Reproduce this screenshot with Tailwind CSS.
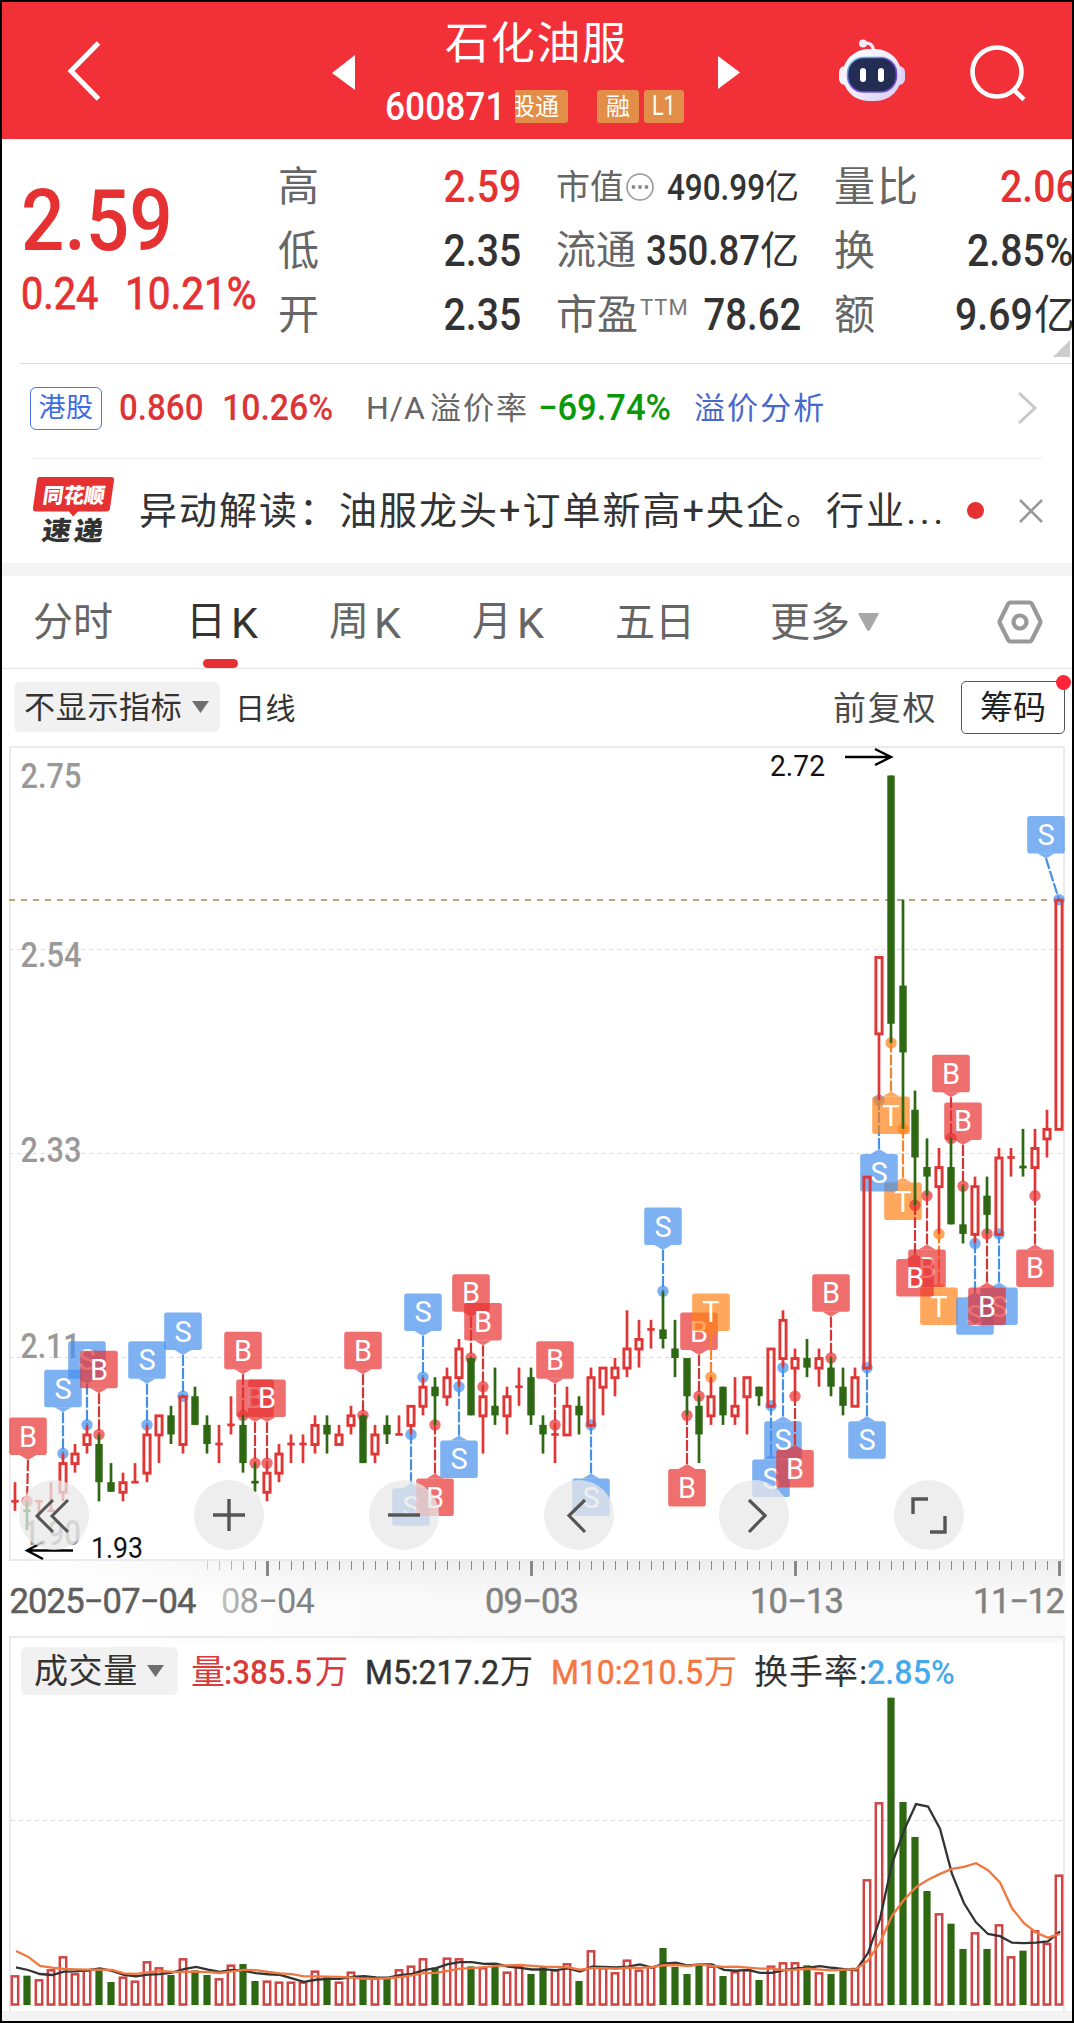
<!DOCTYPE html>
<html lang="zh-CN">
<head>
    <meta charset="UTF-8">
    <meta name="viewport" content="width=device-width, initial-scale=1.0">
    <title>石化油服 600871</title>
    <script src="https://cdn.jsdelivr.net/npm/@tailwindcss/browser@4"></script>
</head>
<body class="bg-black [font-family:Roboto,'Noto_Sans_CJK_SC',sans-serif] leading-none text-[#333]">

    <div class="w-[1074px] h-[2023px] border-2 border-black bg-white overflow-hidden flex flex-col whitespace-nowrap">

        <!-- Header -->
        <header class="h-[137px] shrink-0 bg-[#f23038] text-white flex">
            <div class="w-[326px] pl-[65px] pt-[38px]">
                <svg class="w-[36px] h-[62px]" viewBox="0 0 36 62" fill="none" stroke="#fff" stroke-width="5">
                    <path d="M31.500 3L4 31l27.500 28"/>
                </svg>
            </div>
            <div class="w-[30px] pt-[53px]">
                <svg class="w-[28px] h-[36px]" viewBox="0 0 28 36" fill="#fff"><path d="M4 18L27 0v35z"/></svg>
            </div>
            <div class="w-[358px] flex flex-col pt-[19px]">
                <h1 class="pl-[87px] text-[44px] tracking-[1.700px] leading-[46px]">石化油服</h1>
                <div class="flex items-center pl-[27px] mt-[23px] h-[33px]">
                    <span class="w-[130px] shrink-0 text-[38px] font-medium"><span class="inline-block origin-left scale-x-[.93]">600871</span></span>
                    <span class="w-[53px] shrink-0 h-[33px] rounded-r-[3px] bg-[#e28d48] text-[24px] flex items-center justify-end pr-[9px] overflow-hidden">股通</span>
                    <span class="ml-[29px] shrink-0 w-[42px] h-[33px] rounded-[3px] bg-[#e28d48] text-[24px] flex items-center justify-center">融</span>
                    <span class="ml-[5px] shrink-0 w-[40px] h-[33px] rounded-[3px] bg-[#e28d48] text-[27px] flex items-center justify-center"><span class="inline-block scale-x-[.8]">L1</span></span>
                </div>
            </div>
            <div class="w-[121px] pt-[54px]">
                <svg class="w-[28px] h-[36px]" viewBox="0 0 28 36" fill="#fff"><path d="M2 0v33L24 16.500z"/></svg>
            </div>
            <div class="w-[130px] pt-[34px]">
                <!-- assistant robot -->
                <svg class="w-[70px] h-[68px]" viewBox="837 36 70 68">
                    <defs>
                        <linearGradient id="shell" x1="0" y1="0" x2="1" y2="1">
                            <stop offset="0" stop-color="#fff"/><stop offset=".5" stop-color="#f1edfb"/><stop offset="1" stop-color="#d3caf3"/>
                        </linearGradient>
                        <linearGradient id="rim" x1="0" y1="0" x2="1" y2="1">
                            <stop offset="0" stop-color="#64d3e8"/><stop offset=".5" stop-color="#7a53dc"/><stop offset="1" stop-color="#6d49d5"/>
                        </linearGradient>
                    </defs>
                    <path d="M863 43.500c6-1.500 10 1 10.500 7" fill="none" stroke="#f1e6f5" stroke-width="3.200"/>
                    <circle cx="863" cy="43.500" r="4" fill="#f3ebfa"/>
                    <rect x="839" y="66" width="12" height="19" rx="6" fill="#f4f1fd"/>
                    <rect x="893" y="66" width="12" height="19" rx="6" fill="#d9d0f6"/>
                    <rect x="842.500" y="49" width="59" height="52" rx="26" fill="url(#shell)"/>
                    <rect x="847.500" y="57.500" width="49" height="34.500" rx="16" fill="#232c52" stroke="url(#rim)" stroke-width="1.600"/>
                    <rect x="860" y="68" width="6" height="14" rx="3" fill="#fff"/>
                    <rect x="878" y="68" width="6" height="14" rx="3" fill="#fff"/>
                </svg>
            </div>
            <div class="pt-[40px]">
                <svg class="w-[60px] h-[62px]" viewBox="967 42 60 62" fill="none" stroke="#fff" stroke-width="4.600">
                    <circle cx="997" cy="72" r="24.500"/><path d="M1013.500 89.500l10.500 10"/>
                </svg>
            </div>
        </header>

        <!-- Quote -->
        <section class="h-[224px] shrink-0 flex relative">
            <div class="w-[276px] shrink-0 pl-[19px] pt-[36px] text-[#e63132] font-medium">
                <div class="text-[86px] h-[92px] flex items-center"><span class="inline-block origin-left scale-x-[.89]">2.59</span></div>
                <div class="flex text-[44px] font-normal [-webkit-text-stroke:0.800px_#e63132] mt-[5px]">
                    <span class="w-[104px]"><span class="inline-block origin-left scale-x-[.9]">0.24</span></span>
                    <span class="inline-block origin-left scale-x-[.92]">10.21%</span>
                </div>
            </div>
            <div class="w-[243px] shrink-0 pt-[16px] text-[41px] flex flex-col [&>div]:h-[64px] [&>div]:flex [&>div]:items-center [&>div]:justify-between">
                <div><span class="text-[#666]">高</span><span class="inline-block origin-right scale-x-[.89] font-medium text-[44px] text-[#e63132]">2.59</span></div>
                <div><span class="text-[#666]">低</span><span class="inline-block origin-right scale-x-[.89] font-medium text-[44px]">2.35</span></div>
                <div><span class="text-[#666]">开</span><span class="inline-block origin-right scale-x-[.89] font-medium text-[44px]">2.35</span></div>
            </div>
            <div class="w-[279px] shrink-0 pl-[35px] pt-[16px] flex flex-col [&>div]:h-[64px] [&>div]:flex [&>div]:items-center">
                <div>
                    <span class="text-[34px] text-[#666]">市值</span>
                    <svg class="w-[28px] h-[28px] ml-[2px] -mt-[1px]" viewBox="0 0 28 28" fill="none" stroke="#999" stroke-width="1.600">
                        <circle cx="14" cy="14" r="13"/>
                        <g fill="#888" stroke="none"><circle cx="7.500" cy="14" r="1.900"/><circle cx="14" cy="14" r="1.900"/><circle cx="20.500" cy="14" r="1.900"/></g>
                    </svg>
                    <span class="ml-auto flex items-center text-[37px] font-medium w-[133px]"><span class="inline-block origin-left scale-x-[.85] w-[98px]">490.99</span><span class="text-[34px] font-normal">亿</span></span>
                </div>
                <div>
                    <span class="text-[40px] text-[#666]">流通</span>
                    <span class="ml-auto flex items-center text-[42px] font-medium w-[154px]"><span class="inline-block origin-left scale-x-[.87] w-[114px]">350.87</span><span class="text-[39px] font-normal">亿</span></span>
                </div>
                <div>
                    <span class="text-[41px] text-[#666]">市盈</span><span class="text-[22px] text-[#777] -mt-[14px] ml-[2px] tracking-[1px]">TTM</span>
                    <span class="ml-auto mr-[2px] inline-block origin-right scale-x-[.87] font-medium text-[44px]">78.62</span>
                </div>
            </div>
            <div class="w-[272px] shrink-0 pl-[34px] pt-[16px] text-[41px] flex flex-col [&>div]:h-[64px] [&>div]:flex [&>div]:items-center [&_span]:shrink-0">
                <div><span class="w-[166px] text-[#666] tracking-[2px]">量比</span><span class="inline-block origin-left scale-x-[.89] font-medium text-[44px] text-[#e63132]">2.06</span></div>
                <div><span class="w-[133px] text-[#666]">换</span><span class="inline-block origin-left scale-x-[.89] font-medium text-[44px]">2.85%</span></div>
                <div><span class="w-[121px] text-[#666]">额</span><span class="inline-block origin-left scale-x-[.89] font-medium text-[44px] w-[79px]">9.69</span><span>亿</span></div>
            </div>
            <svg class="absolute right-0 bottom-[6px] w-[19px] h-[19px]" viewBox="0 0 19 19" fill="#ccc"><path d="M0 19L17 2v17z"/></svg>
        </section>

        <!-- H shares -->
        <section class="h-[95px] shrink-0 ml-[17px] pb-[6px] border-t border-[#dfdfdf] flex items-center text-[32px] relative">
            <span class="ml-[11px] w-[72px] h-[43px] border border-[#4a78e8] rounded-[6px] text-[#3b6be6] text-[27px] tracking-[0.500px] flex items-center justify-center">港股</span>
            <span class="ml-[17px] w-[103px] text-[36px] font-medium text-[#dd3536]"><span class="inline-block origin-left scale-x-[.92]">0.860</span></span>
            <span class="w-[144px] text-[36px] font-medium text-[#dd3536]"><span class="inline-block origin-left scale-x-[.94]">10.26%</span></span>
            <span class="w-[64px] text-[#666] tracking-[1px]">H/A</span>
            <span class="w-[108px] text-[#666] text-[31px] tracking-[2px]">溢价率</span>
            <span class="w-[156px] text-[36px] font-medium text-[#089808]"><span class="inline-block origin-left scale-x-[.96]">−69.74%</span></span>
            <span class="text-[#4a68cc] text-[31px] tracking-[2.100px]">溢价分析</span>
            <svg class="absolute left-[998px] top-[27px] w-[22px] h-[34px]" viewBox="0 0 22 34" fill="none" stroke="#c8c8c8" stroke-width="3"><path d="M2 2l16 15L2 32"/></svg>
        </section>

        <!-- News -->
        <section class="h-[105px] shrink-0 mx-[30px] border-t border-[#ececec] flex items-start text-[#333]">
            <svg class="w-[86px] h-[72px] mt-[16px] shrink-0" viewBox="32 475 86 72">
                <path d="M39 477h72q3.500 0 3 3.500l-4 28q-.500 3-4 3H78l-5 5-4-5H36q-3.500 0-3-3.500l4-28q.300-3 2-3z" fill="#e63132"/>
                <g font-family="'Noto Sans CJK SC'" font-weight="900">
                    <text transform="translate(42 503) skewX(-8)" font-size="21" textLength="62" lengthAdjust="spacingAndGlyphs" fill="#fff">同花顺</text>
                    <text transform="translate(41 540) skewX(-8)" font-size="26" textLength="29" lengthAdjust="spacingAndGlyphs" fill="#333">速</text>
                    <text transform="translate(73 540) skewX(-8)" font-size="26" textLength="29" lengthAdjust="spacingAndGlyphs" fill="#333">递</text>
                </g>
            </svg>
            <span class="ml-[21px] mt-[33px] w-[828px] shrink-0 text-[38px] tracking-[2px]">异动解读：油服龙头+订单新高+央企。行业<span class="tracking-[3.500px]">...</span></span>
            <span class="mt-[43px] w-[17px] h-[17px] shrink-0 rounded-full bg-[#e63132]"></span>
            <svg class="ml-[34px] mt-[39px] w-[26px] h-[26px] shrink-0" viewBox="0 0 26 26" stroke="#999" stroke-width="2.600"><path d="M2 2l22 22M24 2L2 24"/></svg>
        </section>

        <div class="h-[13px] shrink-0 bg-[#f4f4f4]"></div>

        <!-- Period tabs -->
        <nav class="h-[93px] shrink-0 border-b border-[#e4e4e4] flex items-center text-[40px] text-[#666] relative">
            <span class="ml-[31px] w-[153px] pt-[2px]">分时</span>
            <span class="w-[143px] pt-[2px] text-[#333] flex"><span class="w-[45px]">日</span><span class="text-[43px]">K</span></span>
            <span class="w-[143px] pt-[2px] flex"><span class="w-[45px]">周</span><span class="text-[43px]">K</span></span>
            <span class="w-[143px] pt-[2px] flex"><span class="w-[45px]">月</span><span class="text-[43px]">K</span></span>
            <span class="w-[155px] pt-[2px]">五日</span>
            <span class="w-[88px] pt-[2px]">更多</span>
            <svg class="w-[21px] h-[19px]" viewBox="0 0 21 19" fill="#a8a8a8"><path d="M1 0h19q1 0 .500 1.500L12 17q-1.500 2-3 0L.500 1.500Q0 0 1 0z"/></svg>
            <svg class="ml-[118px] w-[46px] h-[46px]" viewBox="0 0 46 46" fill="none" stroke="#999" stroke-width="4.200" stroke-linejoin="round">
                <path d="M13.500 3.500h19q1.500 0 2.300 1.300L43 21.500q.700 1.500 0 3L34.800 41q-.800 1.500-2.300 1.500h-19q-1.500 0-2.300-1.500L3 24.500q-.700-1.500 0-3L11.200 4.800q.800-1.300 2.300-1.300z"/><circle cx="23" cy="23" r="6.500"/>
            </svg>
            <span class="absolute left-[201px] bottom-0 w-[35px] h-[9px] rounded-full bg-[#e63132]"></span>
        </nav>

        <!-- Indicator row -->
        <div class="h-[71px] shrink-0 flex items-start">
            <div class="ml-[12px] mt-[13px] w-[206px] h-[50px] rounded-[6px] bg-[#f1f1f1] flex items-center text-[31px] pl-[10px]">
                <span class="w-[168px] tracking-[0.700px]">不显示指标</span>
                <svg class="w-[17px] h-[12px]" viewBox="0 0 17 12" fill="#6f6f6f"><path d="M0 0h17L8.500 12z"/></svg>
            </div>
            <span class="ml-[15px] mt-[25px] w-[598px] text-[30px] tracking-[0.500px]">日线</span>
            <span class="mt-[23px] w-[128px] text-[33px] tracking-[1.800px] text-[#4a4a4a]">前复权</span>
            <div class="mt-[12px] w-[104px] h-[53px] border border-[#555] rounded-[5px] text-[33px] text-[#222] flex items-center justify-center relative">筹码
                <span class="absolute -right-[7px] -top-[7px] w-[15px] h-[15px] rounded-full bg-[#fd2638]"></span>
            </div>
        </div>

        <!-- K-line chart -->
        <div class="relative h-[896px] shrink-0">
            <svg id="kline" class="w-[1070px] h-[896px] block" viewBox="2 740 1070 896">
                <defs>
                    <linearGradient id="axisX" x1="0" x2="1"><stop offset="0" stop-color="#fff"/><stop offset=".45" stop-color="#f9f9f9"/><stop offset="1" stop-color="#f9f9f9"/></linearGradient>
                    <linearGradient id="axisY" x1="0" x2="0" y1="0" y2="1"><stop offset="0" stop-color="#000" stop-opacity=".045"/><stop offset=".5" stop-color="#000" stop-opacity="0"/></linearGradient>
                    <linearGradient id="fadeIn" gradientUnits="userSpaceOnUse" x1="9" x2="330" y1="0" y2="0"><stop offset="0" stop-color="#fff"/><stop offset="1" stop-color="#fff" stop-opacity="0"/></linearGradient>
                    <linearGradient id="dateFade" x1="0" x2="1"><stop offset="0" stop-color="#c4c4c4"/><stop offset=".5" stop-color="#8a8a8a"/><stop offset="1" stop-color="#808080"/></linearGradient>
                </defs>
                <rect x="9" y="1560" width="1056" height="76" fill="url(#axisX)"/>
                <rect x="9" y="1560" width="1056" height="76" fill="url(#axisY)"/>
                <rect x="9" y="1560" width="321" height="76" fill="url(#fadeIn)"/>
                <path d="M10 1560V747H1064V1560z" fill="none" stroke="#ebebeb" stroke-width="2"/>
                <path d="M9 949.500H1062M9 1153.500H1062M9 1357.500H1062" stroke="#dedede" stroke-width="1" stroke-dasharray="4 4" fill="none"/>
                <path d="M9 900H1052" stroke="#b9a67c" stroke-width="2" stroke-dasharray="6 6"/>
                <g fill="#999" font-size="34.500" font-weight="500">
                    <text x="20.500" y="788" textLength="61" lengthAdjust="spacingAndGlyphs">2.75</text>
                    <text x="20.500" y="967" textLength="61" lengthAdjust="spacingAndGlyphs">2.54</text>
                    <text x="20.500" y="1162" textLength="61" lengthAdjust="spacingAndGlyphs">2.33</text>
                    <text x="20.500" y="1358" textLength="60" lengthAdjust="spacingAndGlyphs">2.11</text>
                    <text x="23" y="1545" textLength="58" lengthAdjust="spacingAndGlyphs">1.90</text>
                </g>
                <g id="marks"></g>
                <g id="candles"></g>
                <g fill="none" stroke="#000" stroke-width="2.400">
                    <path d="M845 757h46M875 749l16 8-16 8"/>
                    <path d="M73 1550.500H27M43 1542l-16 8.500 16 8.500"/>
                </g>
                <g fill="#111" font-size="29">
                    <text x="770" y="776" textLength="55" lengthAdjust="spacingAndGlyphs">2.72</text>
                    <text x="91" y="1558" textLength="52" lengthAdjust="spacingAndGlyphs">1.93</text>
                </g>
                <g id="ticks"></g>
                <g fill="#828282" font-size="34.500" stroke="#828282" stroke-width=".5">
                    <text x="9.500" y="1612.500" textLength="187" fill="#5e5e5e" stroke="#5e5e5e">2025−07−04</text>
                    <text x="221" y="1612.500" textLength="94" fill="url(#dateFade)" stroke="none">08−04</text>
                    <text x="485" y="1612.500" textLength="94">09−03</text>
                    <text x="750" y="1612.500" textLength="94">10−13</text>
                    <text x="973" y="1612.500" textLength="92">11−12</text>
                </g>
            </svg>
            <!-- chart controls -->
            <div class="absolute left-[17px] top-[740px] flex gap-[105px] [&>button]:w-[70px] [&>button]:h-[70px] [&>button]:rounded-full [&>button]:bg-[#e8e8e8]/75">
                <button><svg viewBox="0 0 70 70" fill="none" stroke="#555" stroke-width="3"><path d="M34 20L18 36l16 16M49 20L33 36l16 16"/></svg></button>
                <button><svg viewBox="0 0 70 70" fill="none" stroke="#555" stroke-width="3.400"><path d="M19 35h32M35 19v32"/></svg></button>
                <button><svg viewBox="0 0 70 70" fill="none" stroke="#555" stroke-width="3.400"><path d="M19 35h32"/></svg></button>
                <button><svg viewBox="0 0 70 70" fill="none" stroke="#555" stroke-width="3.200"><path d="M41 20L25 35.500l16 16.500"/></svg></button>
                <button><svg viewBox="0 0 70 70" fill="none" stroke="#555" stroke-width="3.200"><path d="M30 20l16 15.500L30 52"/></svg></button>
                <button><svg viewBox="0 0 70 70" fill="none" stroke="#555" stroke-width="3.400"><path d="M34 19H19v15M51 36v16H36"/></svg></button>
            </div>
        </div>

        <!-- Volume -->
        <section class="h-[375px] shrink-0 ml-[7px] mr-[7px] border-x-2 border-t-2 border-[#ebebeb] bg-white">
            <div class="h-[5px] bg-linear-to-r from-white via-[#f9f9f9] to-[#f9f9f9]"></div>
            <div class="h-[62px] flex items-start text-[34px] font-medium">
                <div class="ml-[10px] mt-[4px] w-[157px] h-[48px] rounded-[6px] bg-[#f1f1f1] flex items-center pl-[13px] font-normal">
                    <span class="w-[113px] tracking-[0.600px]">成交量</span>
                    <svg class="w-[17px] h-[12px]" viewBox="0 0 17 12" fill="#6f6f6f"><path d="M0 0h17L8.500 12z"/></svg>
                </div>
                <div class="ml-[13px] mt-[12px] w-[174px] flex text-[#d93a3a]"><span class="w-[33px] font-normal">量</span><span class="inline-block origin-left scale-x-[.92] w-[91px]">:385.5</span><span class="font-normal text-[33px]">万</span></div>
                <div class="mt-[12px] w-[186px] flex"><span class="inline-block origin-left scale-x-[.94] w-[135px] font-normal [-webkit-text-stroke:0.500px_#333]">M5:217.2</span><span class="font-normal text-[33px]">万</span></div>
                <div class="mt-[12px] w-[203px] flex text-[#f5763f]"><span class="inline-block origin-left scale-x-[.94] w-[153px] font-normal [-webkit-text-stroke:0.500px_#f5763f]">M10:210.5</span><span class="font-normal text-[33px]">万</span></div>
                <div class="mt-[12px] flex"><span class="font-normal w-[113px] tracking-[1px]">换手率:</span><span class="inline-block origin-left scale-x-[.95] text-[#45a9ec]">2.85%</span></div>
            </div>
            <svg id="volume" class="w-[1052px] h-[306px] block overflow-visible" viewBox="11 1705 1052 306"></svg>
        </section>

        <div class="h-[10px] shrink-0 bg-[#f3f3f3]"></div>
    </div>

    <script>
        const RED = '#df3636', GREEN = '#2f6813';
        const xAt = i => 15 + i * 12;
        const yAt = p => 775.5 + (272 - p) * 9.55;

        // bodyTop, bodyBottom, high, low (price in cents), r/g
        const candles = `196 196 198 195 r|195 195 196 193 g|196 196 196 194 r|195 195 198 195 r|200 197 201 196 r|201 200 202 199 r|203 202 204 201 r|202 198 203 196 g|198 197 200 197 g|198 197 199 196 r|198 198 200 198 r|203 199 204 198 r|205 203 205 200 r|205 203 206 202 g|207 202 207 201 r|207 204 208 204 g|204 202 205 201 g|202 202 204 200 r|204 204 207 203 r|204 200 205 199 g|198 198 200 197 g|199 197 200 196 r|201 199 202 198 r|202 202 203 200 r|202 202 203 200 r|204 202 205 201 r|204 203 205 201 g|203 202 204 202 r|205 204 206 203 r|205 200 205 200 g|203 201 204 200 r|204 203 205 202 g|203 203 205 203 r|206 204 206 203 r|208 206 209 205 r|208 207 209 204 g|209 207 210 206 r|212 209 213 208 r|211 205 211 205 g|207 205 208 201 r|206 205 210 204 g|207 205 208 203 r|208 208 210 206 r|209 205 210 204 g|204 203 205 201 g|203 203 204 200 r|206 203 208 203 r|206 205 207 203 g|209 204 210 204 r|210 208 210 205 r|210 209 211 207 r|212 210 216 209 r|213 212 215 210 r|214 214 215 212 r|214 213 218 212 g|212 211 215 209 g|211 207 211 205 g|206 203 207 200 g|207 205 209 204 r|208 205 208 204 g|206 205 209 204 r|209 207 209 203 r|208 207 208 206 g|212 206 212 206 r|215 211 216 210 r|211 210 212 207 r|211 210 213 209 g|211 210 212 208 r|210 208 211 207 g|208 206 210 205 g|209 206 210 206 r|230 210 230 210 r|253 245 253 238 r|272 246 272 244 g|250 243 259 235 g|237 232 239 227 g|231 230 234 228 g|231 229 233 224 r|231 225 234 225 g|225 224 229 223 g|229 224 230 223 r|228 226 230 224 g|232 224 233 224 r|232 232 233 230 r|231 231 235 230 g|233 231 235 228 r|235 234 237 232 r|259 235 259 235 r`
            .split('|').map(s => s.split(' '));

        let out = '';
        candles.forEach(([t, b, h, l, c], i) => {
            const x = xAt(i), top = yAt(t), bot = yAt(b), hi = yAt(h), lo = yAt(l);
            const color = c === 'r' ? RED : GREEN;
            const wick = (y1, y2) => y2 > y1 ? `<path d="M${x} ${y1}V${y2}" stroke="${color}" stroke-width="2.7"/>` : '';
            if (t === b) {
                out += wick(hi, lo) + `<path d="M${x - 3.7} ${top}h7.4" stroke="${color}" stroke-width="2.7"/>`;
            } else if (c === 'g') {
                out += wick(hi, lo) + `<rect x="${x - 3.7}" y="${top}" width="7.4" height="${bot - top}" fill="${color}"/>`;
            } else {
                out += wick(hi, top) + wick(bot, lo) + `<rect x="${x - 3.1}" y="${top + .5}" width="6.200" height="${bot - top}" fill="none" stroke="${color}" stroke-width="2.900"/>`;
            }
        });
        document.getElementById('candles').innerHTML = out;

        // bar index, letter, side (u above / d below), price of the dot
        const marks = `1Bu196 4Su201 6Su204 7Bu203 11Su204 14Su207 19Bu205 20Bu200 21Bu200 29Bu205 33Sd203 35Bd204 34Su209 37Sd208 38Bu211 39Bu208 45Bu204 48Sd204 54Su218 56Bd205 57Bu207 58Tu209 63Sd206 64Sd210 65Bd207 68Bu211 71Sd210 74Td235 72Sd238 73Td244 77Td224 76Bd228 75Bd227 78Bu234 79Bu229 80Sd223 82Sd224 81Bd224 85Bd228 87Su259`.split(' ');
        const fills = { B: '#e83030', S: '#4690ec', T: '#ff8217' };
        const lines = { B: '#d43535', S: '#4690e2', T: '#f0862c' };
        out = '';
        marks.forEach(m => {
            const [, i, k, side, p] = m.match(/(\d+)([BST])([ud])(\d+)/);
            const x = xAt(+i), y = yAt(+p);
            const cx = Math.min(Math.max(x, 28), 1046);
            const up = side === 'u';
            const top = up ? y - 83.7 : y + 53.7;
            const tip = up ? top + 42.500 : top - 5;
            const base = up ? top + 37.500 : top;
            out += `<path d="M${cx} ${tip}L${x} ${y}" stroke="${lines[k]}" stroke-width="2.200" stroke-dasharray="11 2"/>
                <circle cx="${x}" cy="${y}" r="5.700" fill="${fills[k]}" fill-opacity=".7"/>
                <rect x="${cx - 18.800}" y="${top}" width="37.600" height="37.500" rx="2.500" fill="${fills[k]}" fill-opacity=".7"/>
                <path d="M${cx - 8.500} ${base}L${cx} ${tip}L${cx + 8.500} ${base}z" fill="${fills[k]}" fill-opacity=".7"/>
                <text x="${cx}" y="${top + 29}" text-anchor="middle" font-size="29" fill="#fff">${k}</text>`;
        });
        document.getElementById('marks').innerHTML = out;

        out = '';
        for (let i = 16; i < 88; i++) {
            const major = [21, 43, 65, 87].includes(i);
            const op = i < 21 ? .35 + (i - 16) * .13 : 1;
            out += `<path d="M${xAt(i) + .5} 1561v${major ? 15 : 9}" stroke="#888" stroke-opacity="${op}" stroke-width="${major ? 3 : 1}"/>`;
        }
        document.getElementById('ticks').innerHTML = out;

        // volume bar heights, in thirds of a pixel
        const vol = [89, 88, 77, 107, 146, 95, 106, 104, 69, 85, 73, 131, 113, 90, 140, 104, 90, 80, 121, 123, 72, 73, 70, 70, 70, 103, 86, 70, 100, 83, 82, 83, 107, 118, 140, 112, 142, 140, 116, 113, 116, 100, 118, 93, 114, 106, 125, 72, 164, 113, 98, 136, 106, 116, 171, 114, 93, 122, 118, 87, 101, 107, 75, 118, 128, 128, 119, 98, 93, 108, 111, 377, 608, 922, 609, 504, 342, 275, 244, 168, 218, 168, 242, 146, 163, 224, 186, 391].map(v => v / 3);
        out = '<path d="M11 1820.500H1062" stroke="#d8d8d8" stroke-dasharray="4 4"/><path d="M11 2005H1063" stroke="#eee" stroke-width="1.500"/>';
        vol.forEach((v, i) => {
            const x = xAt(i), g = candles[i][4] === 'g';
            out += g
                ? `<rect x="${x - 3.600}" y="${2005 - v}" width="7.200" height="${v}" fill="${GREEN}"/>`
                : `<rect x="${x - 3.200}" y="${2006 - v}" width="6.400" height="${v - 1.500}" fill="#fff" stroke="#cf4444" stroke-width="2.500"/>`;
        });
        const avgLine = (n, head) => vol.map((v, i) => {
            const y = i < n - 1 ? 1620 + head[i] / 3 : 2005.500 - vol.slice(i - n + 1, i + 1).reduce((a, b) => a + b) / n;
            return `${xAt(i) + 1},${y}`;
        }).join(' ');
        const ma5 = avgLine(5, [1042, 1050, 1062, 1065]);
        const ma10 = avgLine(10, [993, 1010, 1038, 1043, 1047, 1048, 1049, 1049, 1050]);
        out += `<polyline points="${ma5}" fill="none" stroke="#333" stroke-width="2.300"/>
            <polyline points="${ma10}" fill="none" stroke="#f07840" stroke-width="2.300"/>`;
        document.getElementById('volume').innerHTML = out;
    </script>
</body>
</html>
